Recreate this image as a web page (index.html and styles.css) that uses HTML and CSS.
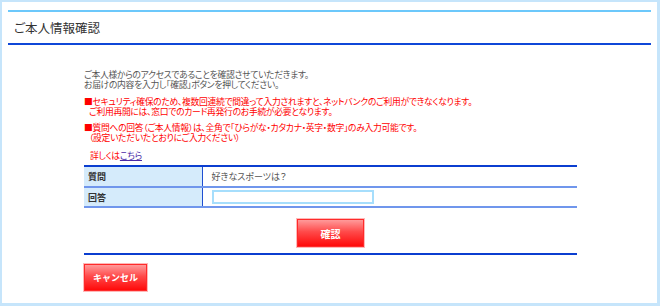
FILE: index.html
```html
<!DOCTYPE html>
<html lang="ja">
<head>
    <meta charset="UTF-8">
    <title>ご本人情報確認</title>
    <link rel="stylesheet" href="styles.css">
</head>
<body>
    <div class="panel">
        <div class="title-bar">
            <h1>ご本人情報確認</h1>
        </div>

        <div class="content">
            <p class="lead">
                ご本人様からのアクセスであることを確認させていただきます。<br>
                お届けの内容を入力し「確認」ボタンを押してください。
            </p>

            <p class="notice notice-first">
                ■セキュリティ確保のため、複数回連続で間違って入力されますと、ネットバンクのご利用ができなくなります。<br>
                <span class="indent">ご利用再開には、窓口でのカード再発行のお手続が必要となります。</span>
            </p>

            <p class="notice notice-second">
                ■質問への回答（ご本人情報）は、全角で「ひらがな・カタカナ・英字・数字」のみ入力可能です。<br>
                <span class="indent">（設定いただいたとおりにご入力ください）</span>
            </p>

            <p class="more">詳しくは<a href="#">こちら</a></p>

            <table class="qa">
                <tr class="row-question">
                    <th>質問</th>
                    <td>好きなスポーツは？</td>
                </tr>
                <tr class="row-answer">
                    <th>回答</th>
                    <td><input type="text" class="answer"></td>
                </tr>
            </table>

            <div class="confirm-area">
                <button class="btn btn-confirm">確認</button>
            </div>

            <div class="footer">
                <button class="btn btn-cancel">キャンセル</button>
            </div>
        </div>
    </div>
</body>
</html>
```

FILE: styles.css
```css
* {
    margin: 0;
    padding: 0;
    box-sizing: border-box;
}

body {
    font-family: "Noto Sans CJK JP", "Noto Sans", sans-serif;
    font-feature-settings: "palt";
    background: #c6e5fb;
    padding: 2px 3px 3px 2px;
    width: 660px;
    height: 306px;
    overflow: hidden;
}

.panel {
    background: #fff;
    height: 301px;
    padding: 8px 6px 0 6px;
}

.title-bar {
    border-top: 2px solid #6cc8fb;
    border-bottom: 2px solid #0f47d8;
    height: 35px;
    display: flex;
    align-items: center;
    padding-left: 6px;
}

.title-bar h1 {
    font-size: 12.5px;
    font-weight: normal;
    color: #333;
}

.content {
    margin-left: 76px;
    width: 493px;
    padding-top: 25px;
}

.lead,
.notice,
.more {
    font-size: 8.8px;
    line-height: 10px;
    letter-spacing: -0.3px;
    white-space: nowrap;
}

.lead {
    color: #555;
}

.notice {
    color: #f00;
}

.notice-first {
    margin-top: 7px;
}

.notice-second {
    margin-top: 6px;
}

.indent {
    padding-left: 5px;
}

.more {
    color: #f00;
    margin-top: 8px;
    padding-left: 6px;
}

.more a {
    color: #4b2aa6;
    text-decoration: underline;
}

.qa {
    width: 100%;
    margin-top: 4px;
    border-collapse: collapse;
    border-top: 2px solid #0b3ed0;
    border-bottom: 2px solid #7096ec;
    font-size: 9px;
}

.qa th {
    width: 118px;
    background: #d5ebfb;
    color: #333;
    text-align: left;
    padding-left: 4px;
    border-right: 1px solid #1f4fd2;
}

.qa td {
    color: #555;
    padding-left: 9px;
}

.row-question th,
.row-question td {
    height: 21px;
    border-bottom: 2px solid #7096ec;
}

.row-answer th,
.row-answer td {
    height: 20px;
}

.answer {
    width: 162px;
    height: 14px;
    border: 2px solid #a6defc;
    background: #fff;
    display: block;
}

.confirm-area {
    display: flex;
    justify-content: center;
    padding: 11px 0 6px;
    border-bottom: 2px solid #0b3ed0;
}

.btn {
    background: linear-gradient(#ff9a9a 0%, #ff4a4a 45%, #ff0a0a 100%);
    border: 1px solid #ff2a2a;
    box-shadow: 0 0 0 1px #ffb8b8;
    color: #fff;
    font-family: inherit;
    font-weight: bold;
    font-size: 10px;
    cursor: pointer;
}

.btn-confirm {
    width: 67px;
    height: 28px;
}

.footer {
    padding-top: 7px;
}

.btn-cancel {
    width: 63px;
    height: 27px;
    font-size: 9px;
}
```
